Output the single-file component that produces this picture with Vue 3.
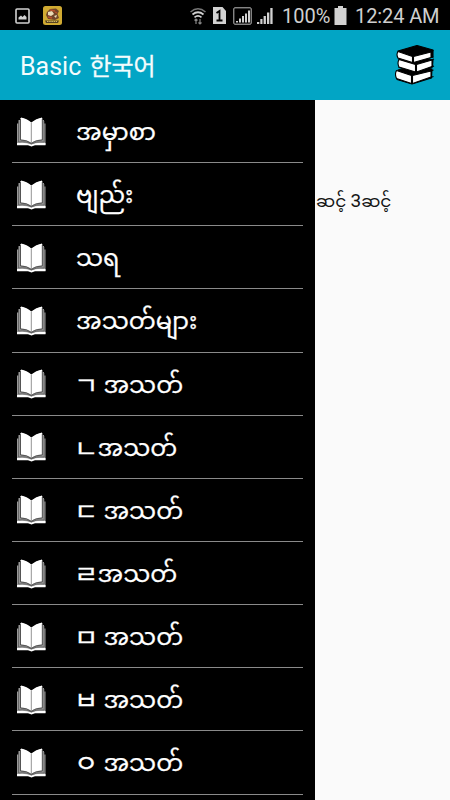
<script setup>
const items = [
  { jamo: '', text: 'အမှာစာ' },
  { jamo: '', text: 'ဗျည်း' },
  { jamo: '', text: 'သရ' },
  { jamo: '', text: 'အသတ်များ' },
  { jamo: 'ㄱ', text: ' အသတ်' },
  { jamo: 'ㄴ', text: 'အသတ်' },
  { jamo: 'ㄷ', text: ' အသတ်' },
  { jamo: 'ㄹ', text: 'အသတ်' },
  { jamo: 'ㅁ', text: ' အသတ်' },
  { jamo: 'ㅂ', text: ' အသတ်' },
  { jamo: 'ㅇ', text: ' အသတ်' }
]
</script>

<template>
  <div class="screen">
    <header class="status">
      <svg class="picture" viewBox="0 0 15 16"><rect x="1" y="1" width="13" height="14" rx="1" fill="none" stroke="#d2d2d2" stroke-width="1.6" /><path d="M3.500 11.500V9.500L6 7.500L7.500 9L9.500 7L11.500 9V11.500Z" fill="#d2d2d2" /></svg>
      <svg class="game" viewBox="0 0 19 19">
        <rect width="19" height="19" rx="2.500" fill="#d0aa32" />
        <path d="M4 6L7 3L13 2.500L16 5L14.500 8L16 12L12 14L5 13L3 9Z" fill="#70452a" />
        <path d="M5 6L9 5L11 8L8 10L5 9ZM11 10L14 9L13 12Z" fill="#eadbb5" />
        <path d="M7 4L12 5M5 11L9 12M12 6L14 7" stroke="#b9502c" stroke-width="1.300" />
        <path d="M2 14.500H16L15 17H3Z" fill="#554324" /><path d="M4 15.500H14" stroke="#d6b965" stroke-dasharray="1.500 .7" />
      </svg>
      <span class="grow"></span>
      <svg class="wifi" viewBox="0 0 18 18" fill="none">
        <path d="M1.500 5Q9-1.500 16.500 5" stroke="#777" stroke-width="1.500" />
        <path d="M3.500 7.500Q9 3 14.500 7.500M5.500 10.300Q9 7.500 12.500 10.300" stroke="#d2d2d2" stroke-width="1.700" />
        <path d="M7 17V12M5.500 13.500L7 12L8.500 13.500M11 12V17M9.500 15.500L11 17L12.500 15.500" stroke="#888" stroke-width="1.200" />
      </svg>
      <svg class="sim" viewBox="0 0 13 17"><path d="M0 0H9.500L13 4V17H0Z" fill="#d2d2d2" /><path d="M3.500 6L6.500 4V13.500M3.500 13.500H9.500" fill="none" stroke="#000" stroke-width="1.800" /></svg>
      <svg class="boxed" viewBox="0 0 19 18"><rect x=".8" y=".8" width="17.400" height="16.400" rx="1" fill="none" stroke="#bdbdbd" /><path d="M3 14H5V15.500H3ZM6 11.500H8V15.500H6ZM9 9H11V15.500H9ZM12 6.500H14V15.500H12ZM15 3.500H17V15.500H15Z" fill="#d2d2d2" /></svg>
      <svg class="signal" viewBox="0 0 16 16"><path d="M0 14H2.300V16H0ZM3.300 11H5.500V16H3.300ZM6.600 8H8.900V16H6.600ZM10 4.500H12.300V16H10ZM13.300 0H15.600V16H13.300Z" fill="#d2d2d2" /></svg>
      <span class="percent">100%</span>
      <svg class="battery" viewBox="0 0 13 19"><path d="M4 0H9V2H12.500V19H.5V2H4Z" fill="#d2d2d2" /></svg>
      <span class="time">12:24 AM</span>
    </header>

    <header class="bar">
      <h1>Basic <span class="korean">한국어</span></h1>
      <svg class="books" viewBox="0 0 40 40">
        <g stroke="#000" stroke-width="1.100" stroke-linejoin="round">
          <path d="M3 25L20 21L37 24L36.500 33L17 39L2 34.500Z" fill="#000" />
          <path d="M1.500 25.500L16.500 30.500V38.500L1.500 33.500Q-.5 29 1.500 25.500Z" fill="#fff" />
          <path d="M17.500 30.500L36 26V32L17.500 38.500Z" fill="#fff" />
          <path d="M35.500 26L38.500 25M35.500 32.500L38.500 31.500" />
          <path d="M4 14L22 11L38 15L37.500 22L21 27L4 22.500Z" fill="#000" />
          <path d="M4 14.500L20.500 19.500V27L4 22Q2 18 4 14.500Z" fill="#fff" />
          <path d="M21.500 19.500L37 15V21.500L21.500 27Z" fill="#fff" />
          <path d="M36.500 15L39 14M36.500 22L39 21" />
          <path d="M3 6L22 .5L38 5V12L18 17L3 13Z" fill="#000" />
          <path d="M3 6.500L17.500 11.500V17.500L3 13Q1 9.500 3 6.500Z" fill="#fff" />
          <path d="M18.500 11.500L36 7V12.500L18.500 17.500Z" fill="#fff" />
          <path d="M36 6.500L38.500 5.500M36 12.500L38.500 12" />
        </g>
      </svg>
    </header>

    <div class="content">
      <nav>
        <div v-for="item in items" :key="item.jamo + item.text" class="row">
          <svg class="book" viewBox="0 0 29 30">
            <path d="M0 6.500H1.500V3H3V1H25.500V3H27V6.500H28.500V28H0Z" fill="#999" />
            <path d="M3.500 0L14.300 5.500L25 0Z" fill="#000" />
            <path d="M0 26Q9 25 14.300 27.500Q19 25 28.500 26V28.300H18L14.500 29.500L11 28.300H0Z" fill="#fff" />
            <path d="M1.500 4V25Q10 24 14.300 27Q19 24 27.200 25V4" fill="none" stroke="#555" stroke-width=".7" />
            <path d="M4 .5Q10 1.500 14.300 5.500Q19 1.500 25 .5V22.500Q18 22.500 14.300 26Q10 22.500 4 22.500Z" fill="#fff" />
            <path d="M3.500 2V23Q10 23 14.300 26.300Q19 23 25.300 23V2" fill="none" stroke="#444" stroke-width=".8" />
            <path d="M14.300 5.500V26" stroke="#777" stroke-width=".8" />
          </svg>
          <span class="label"><span v-if="item.jamo" class="jamo">{{ item.jamo }}</span>{{ item.text }}</span>
        </div>
      </nav>
      <main>ဆင့် <span class="digit">3</span>ဆင့်</main>
    </div>
  </div>
</template>

<style>
body { background: #000; overflow: hidden; }
</style>
<style scoped>
* { box-sizing: border-box; }
.screen { width: 450px; height: 800px; display: flex; flex-direction: column; overflow: hidden; background: #000; font-family: Roboto, "Noto Sans CJK KR", "Noto Sans Myanmar", Padauk, sans-serif; }
.status { height: 30px; flex: none; display: flex; align-items: center; padding: 1px 10px 0 15px; color: #cfcfcf; font-size: 20px; white-space: nowrap; }
.grow { flex: 1; }
svg { flex: none; display: block; }
.picture { width: 15px; height: 16px; }
.game { width: 19px; height: 19px; margin-left: 13px; }
.wifi { width: 18px; height: 18px; margin-right: 6px; }
.sim { width: 13px; height: 17px; margin-right: 7px; }
.boxed { width: 19px; height: 18px; margin-right: 5px; }
.signal { width: 16px; height: 16px; margin-right: 9px; }
.percent { width: 49px; }
.battery { width: 13px; height: 19px; margin: 0 8px 0 3px; }
.time { width: 85px; letter-spacing: -.1px; }
.bar { height: 70px; flex: none; display: flex; align-items: center; justify-content: space-between; padding: 0 15px 0 20px; background: #02a5c5; }
h1 { margin: 0; padding-top: 3px; color: #f4fcfd; font-size: 25px; font-weight: 400; line-height: 36px; white-space: nowrap; }
.korean { margin-left: 2px; font-size: 24px; -webkit-text-stroke: .3px #f4fcfd; }
.books { width: 40px; height: 40px; }
.content { flex: 1; min-height: 0; display: flex; overflow: hidden; background: #fafafa; }
nav { width: 315px; flex: none; padding: 0 12px; background: #000; }
.row { height: 63.15px; display: flex; align-items: center; gap: 30px; padding-left: 5px; border-bottom: 1px solid #8a8a8a; color: #fff; font-size: 24px; line-height: 40px; white-space: nowrap; }
.label { padding-top: 2px; white-space: pre; -webkit-text-stroke: .25px #fff; }
.jamo { display: inline-block; width: 21.5px; font-weight: 400; -webkit-text-stroke: .4px #fff; transform: translate(-1px, 1px) scaleX(1.08); }
.book { width: 29px; height: 30px; margin-top: 1px; }
main { padding-top: 86px; padding-left: 1px; color: #151515; font-size: 17px; line-height: 30px; white-space: nowrap; }
.digit { font-size: 19px; }
</style>
